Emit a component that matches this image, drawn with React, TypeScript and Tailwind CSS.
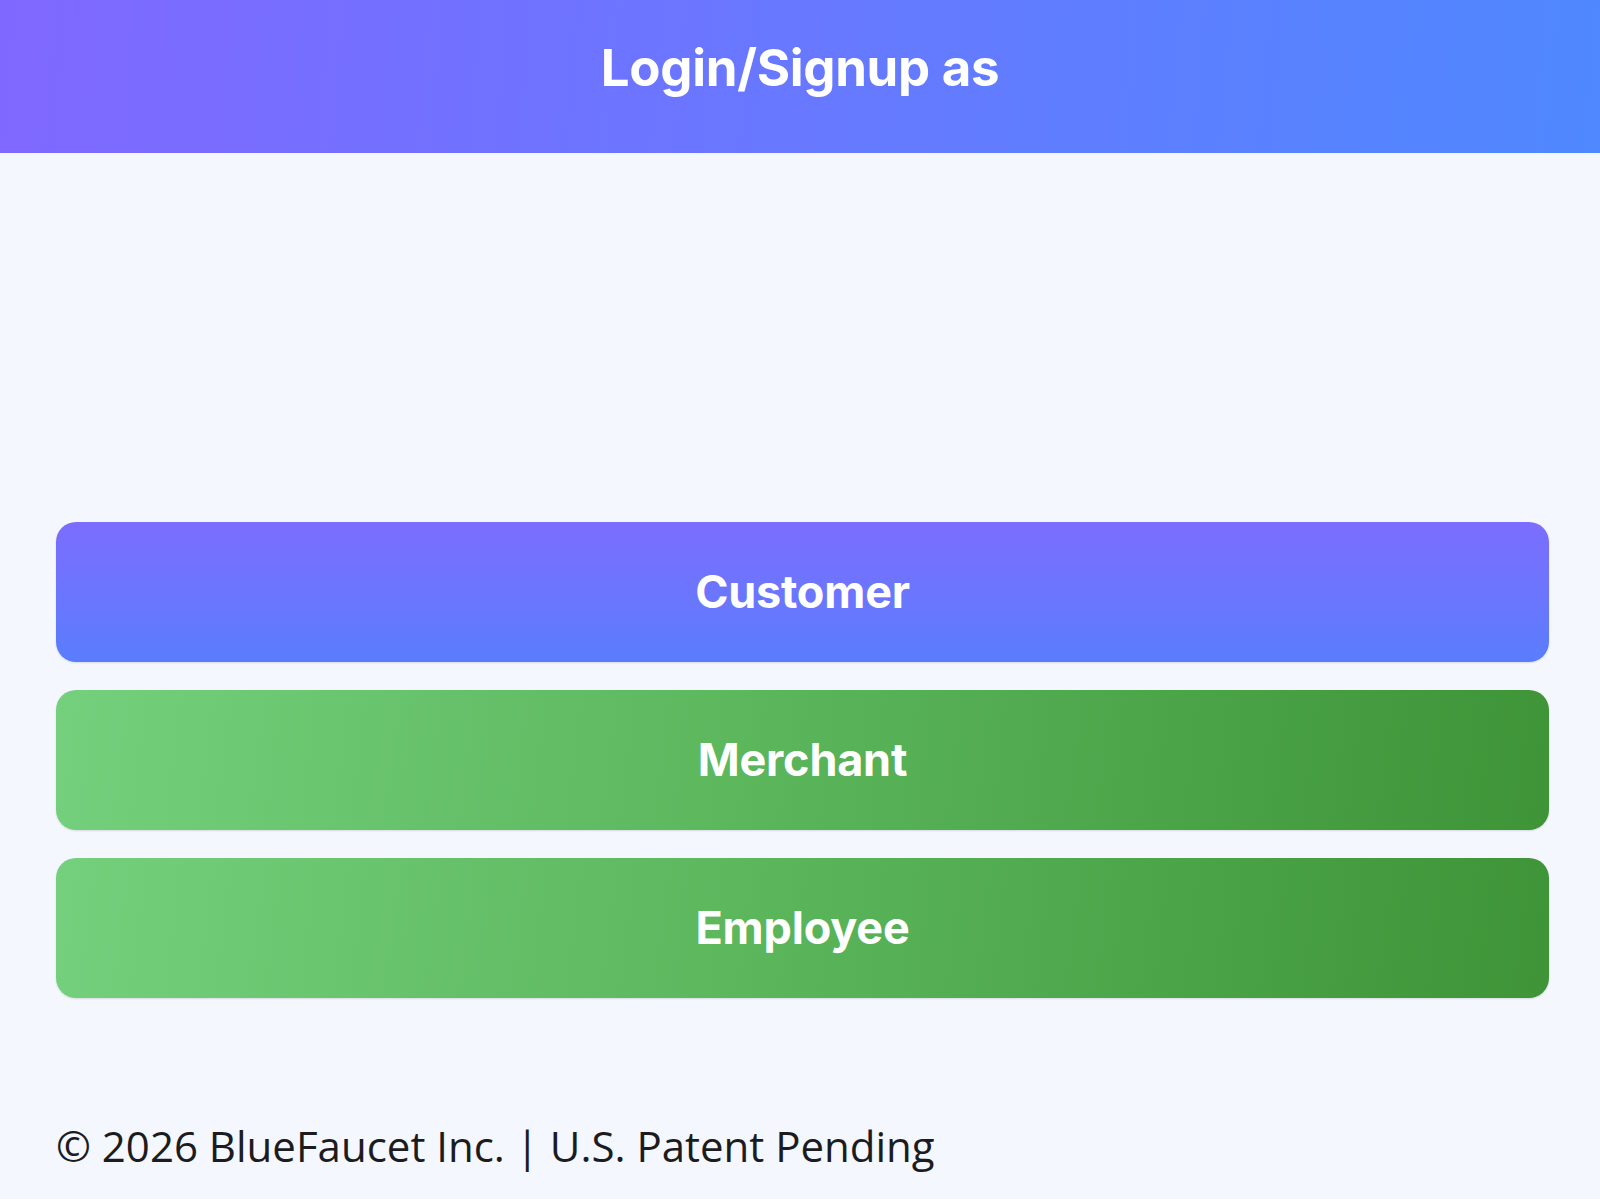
import React from "react";

type Role = {
  label: string;
  tone: "blue" | "green";
};

const roles: Role[] = [
  { label: "Customer", tone: "blue" },
  { label: "Merchant", tone: "green" },
  { label: "Employee", tone: "green" },
];

const RoleButton = ({ label, tone }: Role) => {
  const bg =
    tone === "blue"
      ? "bg-gradient-to-b from-[#7b6dff] to-[#597dfd]"
      : "bg-[linear-gradient(97deg,#74d07c_0%,#5cb75d_45%,#3e9437_100%)]";
  return (
    <button
      className={`${bg} h-[140px] w-full rounded-[20px] text-white text-[45px] font-bold tracking-[-0.2px] shadow-[0_1px_2px_rgba(0,0,0,0.12)] flex items-center justify-center`}
    >
      {label}
    </button>
  );
};

const App = () => {
  return (
    <div className="min-h-screen bg-[#f4f7fe] flex flex-col font-['Inter',sans-serif]">
      {/* Header */}
      <div className="h-[153px] bg-[linear-gradient(95deg,#8068ff,#4f88ff)] flex items-center justify-center">
        <h1 className="text-white text-[51px] font-bold tracking-[-0.3px] pb-[16px]">
          Login/Signup as
        </h1>
      </div>

      <div className="pl-[56px] pr-[51px] pt-[369px] flex flex-col gap-[28px]">
        {roles.map((r) => (
          <RoleButton key={r.label} {...r} />
        ))}
      </div>

      {/* Footer */}
      <footer className="pl-[56px] pt-[118px]">
        <p className="text-[42px] leading-[60px] text-[#1c1c1e] font-['Open_Sans',sans-serif]">
          © 2026 BlueFaucet Inc. | U.S. Patent Pending
        </p>
      </footer>
    </div>
  );
};

export default App;
